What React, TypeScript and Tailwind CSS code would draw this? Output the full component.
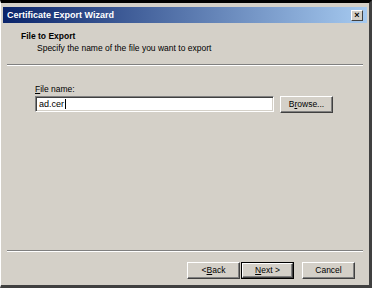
import React from 'react';

const font = { fontFamily: '"Liberation Sans", "DejaVu Sans", sans-serif' };

function Btn({ children, isDefault = false, className = '' }: { children: React.ReactNode; isDefault?: boolean; className?: string }) {
  return (
    <div className={`h-[17px] flex ${isDefault ? 'border border-black' : ''} ${className}`}>
      <div className="flex-1 flex items-center justify-center border border-t-white border-l-white border-r-[#404040] border-b-[#404040] shadow-[inset_-1px_-1px_#808080] text-[8.5px] text-black leading-none">
        {children}
      </div>
    </div>
  );
}

export default function App() {
  return (
    <div style={font} className="w-[372px] h-[288px] bg-[#d4d0c8] border-t-[3px] border-t-black border-l border-l-white border-r-[3px] border-r-[#404040] border-b-[3px] border-b-[#404040] flex flex-col overflow-hidden">
      <div className="mx-[2px] mt-[4px] h-[16px] flex items-center justify-between pl-[4px] pr-[4px] bg-[linear-gradient(to_right,#0a246a,#a6caf0)]">
        <span className="text-white font-bold text-[9px] leading-none">Certificate Export Wizard</span>
        <div className="w-[12px] h-[11px] bg-[#d4d0c8] border border-t-white border-l-white border-r-[#404040] border-b-[#404040] flex items-center justify-center text-[9px] leading-none font-bold text-black">×</div>
      </div>

      <div className="h-[41px] pl-[20px] pt-[9px] flex flex-col gap-[3px]">
        <span className="text-[8.5px] font-bold leading-none text-black">File to Export</span>
        <span className="text-[8.5px] leading-none text-black pl-[16px]">Specify the name of the file you want to export</span>
      </div>
      <div className="mx-[6px] h-[2px] border-t border-t-[#808080] border-b border-b-white" />

      <div className="flex-1 pl-[34px] pt-[19px] flex flex-col gap-[2px]">
        <span className="text-[8.5px] leading-none text-black"><span className="underline">F</span>ile name:</span>
        <div className="flex items-center gap-[6px]">
          <div className="w-[239px] h-[16px] bg-white border border-t-[#808080] border-l-[#808080] border-r-white border-b-white shadow-[inset_1px_1px_#404040,inset_-1px_-1px_#d4d0c8] flex items-center pl-[3px] text-[9px] leading-none text-black">
            ad.cer<span className="inline-block w-px h-[10px] bg-black ml-px" />
          </div>
          <Btn className="w-[53px]">B<span className="underline">r</span>owse...</Btn>
        </div>
      </div>

      <div className="mx-[6px] h-[2px] border-t border-t-[#808080] border-b border-b-white" />
      <div className="h-[33px] flex items-start justify-end pt-[10px] pr-[14px]">
        <Btn className="w-[53px]">&lt; <span className="underline">B</span>ack</Btn>
        <Btn isDefault className="w-[53px] ml-[1px]"><span className="underline">N</span>ext &gt;</Btn>
        <Btn className="w-[53px] ml-[8px]">Cancel</Btn>
      </div>
    </div>
  );
}
